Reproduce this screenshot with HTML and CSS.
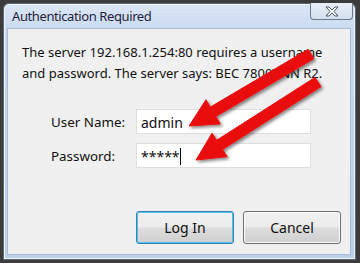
FILE: index.html
```html
<!DOCTYPE html>
<html lang="en">
<head>
  <meta charset="UTF-8" />
  <title>Authentication Required</title>
  <link rel="stylesheet" href="styles.css">
</head>
<body>

  <!-- dialog window -->
  <div class="window">
    <div class="titlebar">
      <span class="title">Authentication Required</span>
      <div class="close-btn">
        <svg width="16" height="11" viewBox="0 0 16 11">
          <path d="M2 1 L5 1 L8 4 L11 1 L14 1 L10 5.5 L14 10 L11 10 L8 7 L5 10 L2 10 L6 5.5 Z" fill="#fff" stroke="#4a5160" stroke-width="1" stroke-linejoin="round"/>
        </svg>
      </div>
    </div>

    <div class="client">
      <p class="message">The server 192.168.1.254:80 requires a username and password. The server says: BEC 7800VNN R2.</p>

      <div class="form">
        <div class="row">
          <label>User Name:</label>
          <div class="field">admin</div>
        </div>
        <div class="row">
          <label>Password:</label>
          <div class="field">*****<span class="caret"></span></div>
        </div>
      </div>

      <div class="buttons">
        <button class="btn default">Log In</button>
        <button class="btn">Cancel</button>
      </div>
    </div>
  </div>

  <!-- red arrows drawn over the dialog -->
  <svg class="arrows" width="360" height="263" viewBox="0 0 360 263">
    <defs>
      <filter id="shadow" x="-20%" y="-20%" width="140%" height="140%">
        <feDropShadow dx="2" dy="2" stdDeviation="1.5" flood-color="#000" flood-opacity="0.45"/>
      </filter>
    </defs>
    <g fill="#ea0f0b" filter="url(#shadow)" stroke="#ea0f0b" stroke-width="1" stroke-linejoin="round">
      <path d="M308.2 49.3 L313.8 58.7 L215.9 116.5 L220.2 123.9 L189 126 L206 99.7 L210.3 107.1 Z"/>
      <path d="M315 77.4 L321 86.6 L222.6 149.5 L227.1 156.7 L196 160 L212.1 133.1 L216.6 140.3 Z"/>
    </g>
  </svg>

</body>
</html>
```

FILE: styles.css
```css
* {
  margin: 0;
  padding: 0;
  box-sizing: border-box;
}

body {
  background-color: #3c3c3c;
  font-family: "Noto Sans", "Open Sans", sans-serif;
  width: 360px;
  height: 263px;
  overflow: hidden;
  position: relative;
}

.window {
  margin: 3px 0 0 3px;
  width: 353px;
  height: 257px;
  border: 1px solid #5d6878;
  border-radius: 6px 6px 0 0;
  background: linear-gradient(#dbe6f5, #c7d8ef 30px, #bcd0ec);
  box-shadow: inset 0 0 0 1px #eef4fc;
  display: flex;
  flex-direction: column;
  padding: 0 4px 4px 3px;
}

.titlebar {
  height: 24px;
  display: flex;
  justify-content: space-between;
  align-items: flex-start;
}

.title {
  font-size: 13px;
  letter-spacing: -0.4px;
  color: #1e1e3c;
  padding: 3px 0 0 5px;
}

.close-btn {
  width: 43px;
  height: 17px;
  margin-top: -1px;
  margin-right: -2px;
  border: 1px solid #6d7889;
  border-top: none;
  border-radius: 0 0 4px 4px;
  background: linear-gradient(#e7eef8, #d3e0f1);
  display: flex;
  justify-content: center;
  align-items: center;
}

.client {
  flex: 1;
  background-color: #f0f0f0;
  border: 1px solid #a7bcd9;
  padding: 13px 0 0 14px;
  display: flex;
  flex-direction: column;
}

.message {
  font-size: 13px;
  line-height: 21px;
  color: #101010;
  width: 325px;
}

.form {
  margin-top: 25px;
  display: flex;
  flex-direction: column;
  gap: 9px;
}

.row {
  display: flex;
  align-items: center;
  height: 25px;
}

.row label {
  width: 85px;
  padding-left: 29px;
  box-sizing: content-box;
  font-size: 13.4px;
  color: #101010;
}

.field {
  width: 175px;
  height: 25px;
  background-color: #fff;
  border: 1px solid #dedede;
  font-size: 14px;
  padding: 2px 0 0 4px;
  color: #111;
  display: flex;
  align-items: center;
}

.caret {
  display: inline-block;
  width: 1px;
  height: 17px;
  background-color: #000;
}

.buttons {
  margin-top: 43px;
  padding-left: 114px;
  display: flex;
  gap: 9px;
}

.btn {
  width: 98px;
  height: 33px;
  font-family: "Noto Sans", "Open Sans", sans-serif;
  font-size: 14px;
  color: #101010;
  border: 1px solid #707070;
  border-radius: 3px;
  background: linear-gradient(#f2f2f2 0%, #ebebeb 48%, #dddddd 52%, #cfcfcf 100%);
  box-shadow: inset 0 0 0 1px #fcfcfc;
}

.btn.default {
  border-color: #3c7fb1;
  box-shadow: inset 0 0 0 1px #48c4ef;
}

.arrows {
  position: absolute;
  top: 0;
  left: 0;
  pointer-events: none;
}
```
